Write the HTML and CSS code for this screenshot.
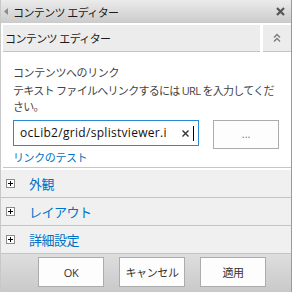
FILE: index.html
```html
<!DOCTYPE html>
<html lang="ja">
<head>
  <meta charset="UTF-8">
  <title>コンテンツ エディター</title>
  <link rel="stylesheet" href="styles.css">
</head>
<body>

  <div class="tool-pane">
    <div class="pane-header">
      <svg class="pane-back" width="4" height="7" viewBox="0 0 4 7"><polygon points="4,0 0,3.5 4,7" fill="#8c8c8c"/></svg>
      <span class="pane-title">コンテンツ エディター</span>
      <svg class="pane-close" width="9" height="9" viewBox="0 0 9 9"><path d="M1 1 L8 8 M8 1 L1 8" stroke="#555" stroke-width="2.2"/></svg>
    </div>

    <div class="part-header">
      <div class="part-title">コンテンツ エディター</div>
      <div class="part-toggle">
        <svg width="8" height="10" viewBox="0 0 8 10"><path d="M1 4.5 L4 1.5 L7 4.5 M1 8.5 L4 5.5 L7 8.5" stroke="#7a7a7a" stroke-width="1.3" fill="none"/></svg>
      </div>
    </div>

    <div class="part-body">
      <div class="field-label">コンテンツへのリンク</div>
      <div class="field-desc">テキスト ファイルへリンクするには URL を入力してくだ<br>さい。</div>
      <div class="field-row">
        <div class="url-input">
          <span class="url-text">ocLib2/grid/splistviewer.i</span>
          <svg class="url-clear" width="7" height="7" viewBox="0 0 7 7"><path d="M0.5 0.5 L6.5 6.5 M6.5 0.5 L0.5 6.5" stroke="#333" stroke-width="1.4"/></svg>
          <span class="url-caret"></span>
        </div>
        <button type="button" class="browse-button">...</button>
      </div>
      <a class="test-link">リンクのテスト</a>
    </div>
    <div class="part-sep"></div>

    <div class="sections">
      <div class="section-row"><span class="expander"></span><span class="section-title">外観</span></div>
      <div class="section-row"><span class="expander"></span><span class="section-title">レイアウト</span></div>
      <div class="section-row"><span class="expander"></span><span class="section-title">詳細設定</span></div>
    </div>

    <div class="pane-footer">
      <button type="button" class="pane-button">OK</button>
      <button type="button" class="pane-button">キャンセル</button>
      <button type="button" class="pane-button">適用</button>
    </div>
  </div>

</body>
</html>
```

FILE: styles.css
```css
body {
  margin: 0;
  background: #fff;
  font-family: 'Open Sans', 'Noto Sans CJK JP', sans-serif;
}
.tool-pane {
  width: 292px;
  height: 292px;
  box-sizing: border-box;
  border-left: 1px solid #c8c8c8;
  border-right: 1px solid #9a9a9a;
  display: flex;
  flex-direction: column;
}
.pane-header {
  height: 23px;
  flex-shrink: 0;
  display: flex;
  align-items: center;
  padding: 0 4px 0 3px;
  background: linear-gradient(to bottom, #ebebeb, #cbcbcb);
}
.pane-back {
  margin-right: 5px;
}
.pane-title {
  flex: 1;
  font-size: 11px;
  letter-spacing: -0.6px;
  color: #1a1a1a;
}
.pane-close {
  margin-right: 2px;
}
.part-header {
  display: flex;
  gap: 3px;
  margin: 2px 0 0 2px;
}
.part-title {
  flex: 1;
  height: 26px;
  display: flex;
  align-items: center;
  padding-left: 2px;
  background: #ececec;
  border-bottom: 1px solid #c4c4c4;
  font-size: 11px;
  letter-spacing: -0.6px;
  color: #1a1a1a;
}
.part-toggle {
  width: 28px;
  height: 26px;
  display: flex;
  align-items: center;
  justify-content: center;
  background: #ececec;
  border-bottom: 1px solid #c4c4c4;
}
.part-body {
  padding: 13px 12px 1px;
  font-size: 11px;
  letter-spacing: -0.4px;
  line-height: 16px;
  color: #444;
}
.field-desc {
  margin-top: 2px;
  white-space: nowrap;
  letter-spacing: -0.7px;
}
.field-row {
  display: flex;
  align-items: flex-start;
  gap: 14px;
  margin-top: 5px;
}
.url-input {
  width: 187px;
  height: 26px;
  box-sizing: border-box;
  border: 1px solid #2b88d8;
  display: flex;
  align-items: center;
  padding-left: 6px;
  background: #fff;
}
.url-text {
  font-size: 12px;
  letter-spacing: 0.3px;
  color: #111;
  width: 157px;
  overflow: hidden;
  white-space: nowrap;
}
.url-clear {
  margin-left: 5px;
}
.url-caret {
  width: 1px;
  height: 15px;
  background: #000;
  margin-left: 4px;
}
.browse-button {
  width: 66px;
  height: 29px;
  border: 1px solid #ababab;
  background: #fdfdfd;
  color: #777;
  font-family: 'Open Sans', sans-serif;
  font-size: 11px;
  padding: 0 0 2px;
}
.test-link {
  display: block;
  margin-top: 1px;
  color: #0072c6;
  cursor: pointer;
}
.part-sep {
  margin: 0 0 0 2px;
  border-top: 1px solid #c6c6c6;
}
.sections {
  margin-top: 2px;
  background: #f0f0f0;
}
.section-row {
  height: 27px;
  display: flex;
  align-items: center;
  border-bottom: 1px solid #c4c4c4;
}
.expander {
  position: relative;
  width: 9px;
  height: 9px;
  box-sizing: border-box;
  border: 1px solid #8c8c8c;
  background: #fff;
  margin: 0 14px 0 5px;
}
.expander::before,
.expander::after {
  content: '';
  position: absolute;
  background: #000;
}
.expander::before {
  left: 1px;
  top: 3px;
  width: 5px;
  height: 1px;
}
.expander::after {
  left: 3px;
  top: 1px;
  width: 1px;
  height: 5px;
}
.section-title {
  font-size: 13px;
  letter-spacing: -0.5px;
  color: #0072c6;
}
.pane-footer {
  flex: 1;
  display: flex;
  align-items: flex-start;
  gap: 15px;
  padding: 3px 0 0 37px;
  background: linear-gradient(to bottom, #dedede, #c9c9c9);
}
.pane-button {
  width: 66px;
  height: 30px;
  border: 1px solid #acacac;
  background: #fdfdfd;
  color: #333;
  font-family: 'Open Sans', 'Noto Sans CJK JP', sans-serif;
  font-size: 11px;
  letter-spacing: -0.4px;
  padding: 0;
}
```
